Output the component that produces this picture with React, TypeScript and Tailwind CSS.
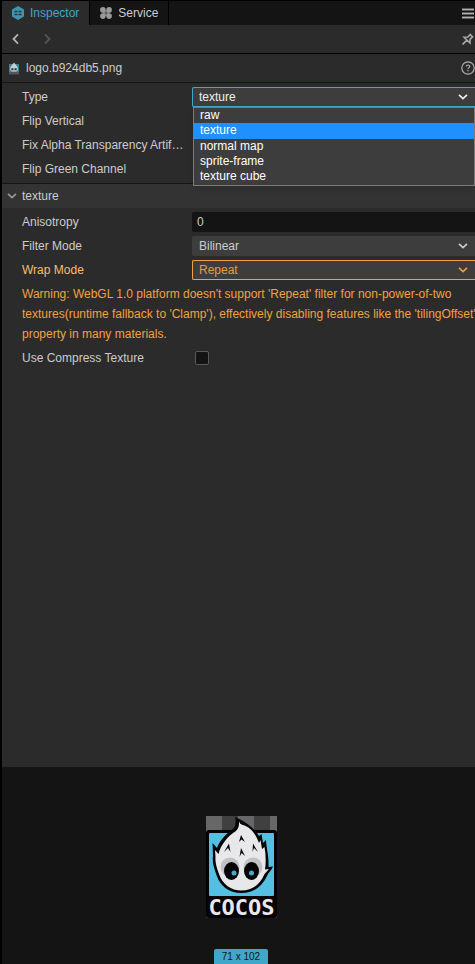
import React, { useState } from "react";

type SelectProps = {
  id: string;
  value: string;
  options: string[];
  tone?: "normal" | "focus" | "warn";
  onChange: (value: string) => void;
};

const selectTones = {
  normal: "border-[#3d3d3d] text-[#cccccc]",
  focus: "border-[#3fa7c9] text-[#eeeeee]",
  warn: "border-[#f2a13f] text-[#ea9a41]",
};

function Chevron({ className }: { className: string }) {
  return (
    <svg className={className} width="10" height="6" viewBox="0 0 10 6" fill="none" aria-hidden="true">
      <path d="M1 0.8 5 4.6 9 0.8" stroke="currentColor" strokeWidth="1.7" />
    </svg>
  );
}

function SelectBox({ id, value, options, tone = "normal", onChange }: SelectProps) {
  return (
    <div className={`relative h-5 rounded-l-xs border border-r-0 bg-[#3d3d3d] ${selectTones[tone]}`}>
      <select
        id={id}
        value={value}
        onChange={(e) => onChange(e.target.value)}
        className="block h-full w-full appearance-none bg-transparent pl-1.5 outline-none"
      >
        {options.map((o) => (
          <option key={o}>{o}</option>
        ))}
      </select>
      <Chevron className="pointer-events-none absolute right-[7px] top-1.5" />
    </div>
  );
}

function Row({ id, label, warn, children }: { id: string; label: string; warn?: boolean; children: React.ReactNode }) {
  return (
    <div className="flex h-6 items-center">
      <label htmlFor={id} className={`w-[170px] shrink-0 whitespace-nowrap ${warn ? "text-[#f5bd73]" : ""}`}>
        {label}
      </label>
      <div className="relative min-w-0 flex-1">{children}</div>
    </div>
  );
}

function CheckBox({ id }: { id: string }) {
  return (
    <input
      id={id}
      type="checkbox"
      className="ml-[3px] block size-3.5 appearance-none rounded-xs border border-[#5a5a5a] bg-[#141414] checked:bg-[#3fa7c9]"
    />
  );
}

const types = ["raw", "texture", "normal map", "sprite-frame", "texture cube"];

function TypeMenu({ value, onPick }: { value: string; onPick: (v: string) => void }) {
  return (
    <ul
      role="listbox"
      aria-label="Type"
      className="absolute inset-x-0 top-full z-10 ml-px border border-[#7b7b7b] bg-[#3d3d3d] pb-px text-white shadow-md"
    >
      {types.map((t) => (
        <li
          key={t}
          role="option"
          aria-selected={t === value}
          onClick={() => onPick(t)}
          className={`pl-1.5 leading-[15px] ${t === value ? "h-4 bg-[#1e90ff]" : "h-[15px]"}`}
        >
          {t}
        </li>
      ))}
    </ul>
  );
}

function InspectorIcon() {
  return (
    <svg width="12" height="14" viewBox="0 0 12 14" aria-hidden="true">
      <path d="M6 0 12 3.500V10.500L6 14 0 10.500V3.500Z" fill="#3f94b0" />
      <path d="M2.500 5.500h3M6.500 5.500h3M2.500 8.500h3M6.500 8.500h3" stroke="#24343a" strokeWidth="1.500" />
    </svg>
  );
}

function ServiceIcon() {
  return (
    <svg width="12" height="12" viewBox="0 0 12 12" fill="#999999" aria-hidden="true">
      <circle cx="2.900" cy="2.900" r="2.800" />
      <circle cx="9.100" cy="2.900" r="2.800" />
      <circle cx="2.900" cy="9.100" r="2.800" />
      <circle cx="9.100" cy="9.100" r="2.800" />
      <path d="M3 3h2.700v2.700H3zM6.300 3H9v2.700H6.300zM3 6.300h2.700V9H3zM6.300 6.300H9V9H6.300z" />
    </svg>
  );
}

function FileIcon() {
  return (
    <svg width="10" height="13" viewBox="0 0 10 13" aria-hidden="true">
      <rect y="2" width="10" height="8" fill="#3f7f95" />
      <rect y="10" width="10" height="2.500" fill="#55565a" />
      <path d="M5 0.500 8.500 5 9 7.500 7.500 9.500H2.500L1 7.500 1.500 5Z" fill="#c9cdcf" />
      <path d="M2.300 6.300h2.200v2H2.300zM5.500 6.300h2.200v2H5.500z" fill="#26383f" />
    </svg>
  );
}

function CocosLogo() {
  return (
    <svg width="71" height="102" viewBox="0 0 71 102" role="img" aria-label="Texture preview">
      <path d="M0 0h71v102H0z" fill="#404040" />
      <path d="M0 0h16v16H0zM32 0h16v16H32zM64 0h7v16h-7z" fill="#676767" />
      <rect y="14" width="71" height="88" rx="3" fill="#050305" />
      <rect x="3" y="17" width="65" height="63" rx="1" fill="#54bfe2" />
      <path
        d="M29 0.500C32 3 36 4 40 7 46 11 50 15 53 20L55.500 18 57 27 60 24C60 30 63 40 62.500 51L67 50.500C65 55 62 57 61 60 56 71 47 77 35.500 77 23 77 14 70 10.500 59 8 52 6 46 7 40L6.500 27 11 32C14 24 20 18 28 12 30 8 30 5 29 0.500Z"
        fill="#050305"
      />
      <path
        d="M33 5C34 10 38 8 43 12 48 16 51 21 53 27L54.500 24 56 33 58.500 31C60 39 60 47 59 53.500L63 53 58.500 58C54 69 46 74.500 35.500 74.500 25 74.500 16.500 68.500 13 58 10.500 51 9 46 9.500 41L9 34 12.500 38C15 28 22 20 30 15 33 12 33 9 33 5Z"
        fill="#e8e8ea"
      />
      <path d="M35 19 39 26 35.500 23.500 33 26ZM23 27.500 24.500 36 22 32 18 36ZM47 27.500 52 36 48 32 46.500 36ZM35 32 39 40 35.500 37 33.500 41Z" fill="#08080a" />
      <circle cx="24" cy="51" r="9.500" fill="#c1c2c4" />
      <circle cx="47" cy="51" r="9.500" fill="#c1c2c4" />
      <ellipse cx="25.500" cy="55" rx="7.500" ry="9" fill="#050507" />
      <ellipse cx="45.500" cy="55" rx="7.500" ry="9" fill="#050507" />
      <circle cx="28" cy="57" r="2.500" fill="#4aa9c9" />
      <circle cx="45.500" cy="57" r="2.500" fill="#4aa9c9" />
      <text x="35.500" y="98.500" textAnchor="middle" fontSize="22" fontWeight="700" fontFamily="DejaVu Sans Mono, monospace" fill="#e8e8ea">
        COCOS
      </text>
    </svg>
  );
}

export default function App() {
  const [type, setType] = useState("texture");
  const [filter, setFilter] = useState("Bilinear");
  const [wrap, setWrap] = useState("Repeat");

  return (
    <div className="flex min-h-screen flex-col overflow-hidden border-l-2 border-t border-black bg-[#2b2b2b] font-['Liberation_Sans',Arial,sans-serif] text-xs text-[#cccccc]">
      <div className="flex h-6 items-stretch bg-[#141414]">
        <button className="flex items-center gap-1.5 border-r border-black bg-[#2b2b2b] px-2.5 text-[#3fa7c9]">
          <InspectorIcon />
          Inspector
        </button>
        <button className="flex items-center gap-1.5 border-r border-black px-2.5">
          <ServiceIcon />
          Service
        </button>
        <button aria-label="Menu" className="ml-auto mr-px flex items-center">
          <svg width="12" height="11" viewBox="0 0 12 11" aria-hidden="true">
            <path d="M0 0h12v3H0zM0 4h12v3H0zM0 8h12v3H0z" fill="#5a5a5a" />
            <path d="M0 1.500h12M0 5.500h12M0 9.500h12" stroke="#b0b0b0" />
          </svg>
        </button>
      </div>

      <div className="flex h-[29px] items-center border-b border-black pl-2.5">
        <button aria-label="Back" className="text-[#b5b5b5]">
          <svg width="7" height="10" viewBox="0 0 7 10" fill="none" aria-hidden="true">
            <path d="M6 .4 1.500 5 6 9.600" stroke="currentColor" strokeWidth="1.800" />
          </svg>
        </button>
        <button aria-label="Forward" className="ml-[25px] text-[#555555]">
          <svg width="7" height="10" viewBox="0 0 7 10" fill="none" aria-hidden="true">
            <path d="M1 .4 5.500 5 1 9.600" stroke="currentColor" strokeWidth="1.800" />
          </svg>
        </button>
        <button aria-label="Lock" className="ml-auto mr-px">
          <svg width="12" height="12" viewBox="0 0 12 12" fill="none" stroke="#a8a8a8" strokeWidth="1.600" aria-hidden="true">
            <path d="M7.600.9 11.200 4.500M8.400 1.400 5.800 4 2 4.200 7.900 10 8 6.300 10.700 3.700M4.900 7.100.5 11.500" />
          </svg>
        </button>
      </div>

      <div className="flex h-[29px] items-center gap-[7px] border-b border-[#141414] pl-[7px]">
        <FileIcon />
        <span>logo.b924db5.png</span>
        <button aria-label="Help" className="ml-auto">
          <svg width="14" height="14" viewBox="0 0 14 14" fill="none" stroke="#b0b0b0" aria-hidden="true">
            <circle cx="7" cy="7" r="6.200" strokeWidth="1.200" />
            <path d="M5.300 5.600C5.300 3.500 8.700 3.500 8.700 5.500 8.700 6.600 7 6.700 7 8" strokeWidth="1.200" />
            <path d="M7 9v1.300" strokeWidth="1.300" />
          </svg>
        </button>
      </div>

      <div className="pb-0.5 pl-5 pt-0.5">
        <Row id="type" label="Type">
          <SelectBox id="type" value={type} options={types} tone="focus" onChange={setType} />
          <TypeMenu value={type} onPick={setType} />
        </Row>
        <Row id="flip-vertical" label="Flip Vertical">
          <CheckBox id="flip-vertical" />
        </Row>
        <Row id="fix-alpha" label="Fix Alpha Transparency Artif…">
          <CheckBox id="fix-alpha" />
        </Row>
        <Row id="flip-green" label="Flip Green Channel">
          <CheckBox id="flip-green" />
        </Row>
      </div>

      <button className="flex h-[25px] items-center gap-[5px] border-t border-[#141414] bg-[#333333] pl-[5px]">
        <Chevron className="text-[#999999]" />
        texture
      </button>

      <div className="pl-5 pt-0.5">
        <Row id="anisotropy" label="Anisotropy">
          <input
            id="anisotropy"
            type="text"
            defaultValue="0"
            className="block h-5 w-full rounded-l-xs bg-[#141414] pl-[5px] outline-none"
          />
        </Row>
        <Row id="filter" label="Filter Mode">
          <SelectBox id="filter" value={filter} options={["Nearest", "Bilinear", "Trilinear"]} onChange={setFilter} />
        </Row>
        <Row id="wrap" label="Wrap Mode" warn>
          <SelectBox id="wrap" value={wrap} options={["Repeat", "Clamp", "Mirror"]} tone="warn" onChange={setWrap} />
        </Row>
        <p className="-mr-1 my-0.5 leading-5 text-[#f2a13f]">
          Warning: WebGL 1.0 platform doesn't support 'Repeat' filter for non-power-of-two textures(runtime fallback to
          'Clamp'), effectively disabling features like the 'tilingOffset' property in many materials.
        </p>
        <Row id="compress" label="Use Compress Texture">
          <CheckBox id="compress" />
        </Row>
      </div>

      <div className="mt-auto flex h-[197px] flex-col items-center justify-between bg-[#141414] pl-[5px] pt-[49px]">
        <CocosLogo />
        <span className="rounded-t-xs bg-[#3fa7c9] px-2 text-[10px] leading-[15px] text-[#141414]">71 x 102</span>
      </div>
    </div>
  );
}
